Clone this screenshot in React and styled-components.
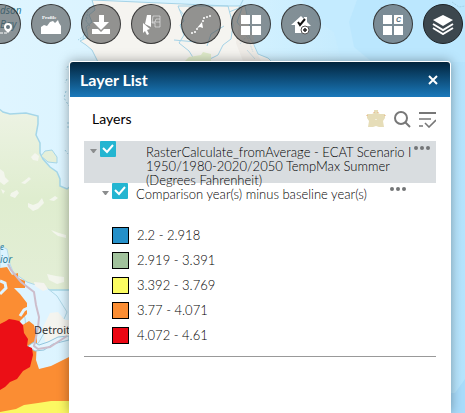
import React from "react";
import styled, { createGlobalStyle } from "styled-components";

const Global = createGlobalStyle`
  *, *::before, *::after { box-sizing: border-box; }
  body { margin: 0; font-family: Lato, "Open Sans", sans-serif; color: #000; }
`;

const Viewer = styled.div`
  position: relative;
  display: flex;
  flex-direction: column;
  min-height: 100vh;
  overflow: hidden;
`;

const MapCanvas = styled.svg`
  position: absolute;
  inset: 0;
  width: 100%;
  height: 100%;
`;

const Toolbar = styled.nav`
  position: relative;
  display: flex;
  justify-content: space-between;
  padding: 4px 2px 0 0;
`;

const ToolGroup = styled.div`
  display: flex;
  flex: none;
  gap: 10px;
  margin-left: ${(p) => (p.$bleed ? "-19px" : "0")};
`;

const ToolButton = styled.button`
  display: grid;
  place-items: center;
  width: 40px;
  height: 40px;
  padding: 0;
  border: 1px solid ${(p) => (p.$active ? "#1c2226" : "rgba(40, 40, 40, 0.85)")};
  border-radius: 50%;
  background: ${(p) => (p.$active ? "#3c474e" : "rgba(80, 80, 80, 0.6)")};
  color: #fff;
  cursor: pointer;
`;

const Panel = styled.section`
  position: relative;
  flex: 1;
  margin: 17px 14px 0 69px;
  border: 1px solid #fff;
  border-bottom: 0;
  border-radius: 4px 4px 0 0;
  background: #fff;
  box-shadow: 0 0 12px rgba(0, 0, 0, 0.35);
`;

const PanelHeader = styled.header`
  display: flex;
  align-items: center;
  justify-content: space-between;
  height: 35px;
  padding: 0 11px 0 10px;
  border-radius: 3px 3px 0 0;
  background: linear-gradient(#02243c, #1a79bb);
  color: #fff;
`;

const PanelTitle = styled.h1`
  margin: 0;
  font-size: 16px;
  line-height: 20px;
  font-weight: 700;
`;

const IconButton = styled.button`
  display: grid;
  place-items: center;
  padding: 0;
  border: 0;
  background: none;
  color: ${(p) => p.$tone || "#777"};
  cursor: pointer;
`;

const PanelBody = styled.div`
  padding: 0 14px;
`;

const ListHeader = styled.div`
  display: flex;
  align-items: center;
  justify-content: space-between;
  height: 44px;
  padding-left: 8px;
`;

const ListTitle = styled.h2`
  margin: 0;
  font-size: 14px;
  line-height: 20px;
  font-weight: 400;
`;

const Actions = styled.div`
  display: flex;
  align-items: center;
  gap: 8px;
`;

const LayerRow = styled.div`
  display: flex;
  align-items: flex-start;
  height: ${(p) => (p.$child ? "32px" : "42px")};
  padding: ${(p) => (p.$child ? "0 30px 0 18px" : "0 6px")};
  background: ${(p) => (p.$child ? "transparent" : "#d9dde0")};
`;

const Twisty = styled(IconButton)`
  width: 7px;
  margin: 8px 3px 0 0;
`;

const CheckBox = styled.span`
  display: grid;
  flex: none;
  width: 16px;
  height: 16px;
  > * { grid-area: 1 / 1; }
  svg { pointer-events: none; }
`;

const CheckInput = styled.input`
  appearance: none;
  width: 16px;
  height: 16px;
  margin: 0;
  border-radius: 1px;
  background: #24b5d1;
  &:not(:checked) { background: #fff; border: 1px solid #24b5d1; }
  &:not(:checked) + svg { visibility: hidden; }
`;

const LayerName = styled.label`
  flex: 1;
  min-width: 0;
  padding: 4px 0 0 ${(p) => (p.$child ? "8px" : "30px")};
  font-size: 13px;
  font-weight: 300;
  line-height: 14px;
`;

const MoreButton = styled(IconButton)`
  flex: none;
  width: 16px;
  margin-top: ${(p) => (p.$child ? "4px" : "5px")};
`;

const Legend = styled.ul`
  display: flex;
  flex-direction: column;
  gap: 8px;
  margin: 0;
  padding: 12px 0 12px 28px;
  border-bottom: 1px solid #999;
  list-style: none;
`;

const LegendItem = styled.li`
  display: flex;
  align-items: center;
  gap: 8px;
  font-size: 13px;
  font-weight: 300;
  line-height: 17px;
`;

const Swatch = styled.span`
  width: 17px;
  height: 17px;
  border: 1px solid #000;
  background: ${(p) => p.$color};
`;

const LEGEND = [
  ["#2590c9", "2.2 - 2.918"],
  ["#a1c29c", "2.919 - 3.391"],
  ["#fbfc62", "3.392 - 3.769"],
  ["#fb8d33", "3.77 - 4.071"],
  ["#eb0713", "4.072 - 4.61"],
];

const Glyph = ({ children, size = 22 }) => (
  <svg width={size} height={size} viewBox="0 0 22 22" fill="currentColor" aria-hidden="true">
    {children}
  </svg>
);

const TOOLS = [
  ["Area search", <Glyph><path d="M9 9H5M9 20H6" fill="none" stroke="currentColor" strokeDasharray="3 1" /><path d="M10 20h8" stroke="currentColor" strokeDasharray="3 1" /><path d="M18 20c-3-3-4-4-4-6a4 4 0 0 1 8 0c0 2-1 3-4 6z" /><circle cx="18" cy="14" r="2" fill="#667780" /></Glyph>],
  ["Elevation profile", <Glyph><text x="2" y="6" fontSize="5" fontWeight="700" fontFamily="Liberation Serif, serif">Profile</text><path d="M1 21v-7l3-2 3 1 3-4 3-1 2 2 3-3 1 3 2 3v8z" /></Glyph>],
  ["Download", <Glyph><path d="M9 2h5v7h5l-8 8-8-8h6zM2 16h6l3 3 3-3h6v5H2z" /></Glyph>],
  ["Select", <Glyph><path d="M7 2h4v12l-6-3z" /><path d="M13 3h7v11h-5v-4h-3zM12 9h3l1-3h4M15 9h5" fill="none" stroke="currentColor" opacity=".5" /><path d="M3 10l7 6-3 1 2 4-2 1-2-4-2 2z" /></Glyph>],
  ["Trace", <Glyph><circle cx="2" cy="20" r="1" /><circle cx="5" cy="19" r="1" /><circle cx="7" cy="16" r="1" /><circle cx="13" cy="8" r="1" /><circle cx="14" cy="5" r="1" /><circle cx="17" cy="4" r="1" /><circle cx="20" cy="3" r="1" /><path d="M12 9l1 6-3-1-3 1z" /></Glyph>],
  ["Basemap gallery", <Glyph><path d="M1 2h9v9H1zM12 2h9v9h-9zM1 13h9v9H1zM12 13h9v9h-9z" /></Glyph>],
  ["Home selection", <Glyph><path d="M1 12l10-9 3 3V4h3v5l4 4h-3v7H5v-8z" /><path d="M8 9l2 3 5-6" fill="none" stroke="#111" strokeWidth="2" /><circle cx="15" cy="17" r="4" fill="#fff" stroke="#555" /><path d="M15 15v4M13 17h4" stroke="#222" strokeWidth="1.5" /></Glyph>],
];

const END_TOOLS = [
  ["Custom basemaps", <Glyph><path d="M1 2h9v9H1zM12 2h9v9h-9zM1 13h9v9H1zM12 13h9v9h-9z" /><text x="14" y="9" fontSize="7" fontStyle="italic" fontWeight="700" fill="#57707d">C</text></Glyph>],
  ["Layer list", <Glyph><path d="M11 2l10 5-10 6L1 7z" /><path d="M1 11l10 6 10-6M1 15l10 6 10-6" fill="none" stroke="currentColor" strokeWidth="2" /></Glyph>],
];

function MapBackdrop() {
  return (
    <MapCanvas viewBox="0 0 465 413" preserveAspectRatio="xMinYMin slice" aria-hidden="true">
      <defs>
        <linearGradient id="sea"><stop offset="0" stopColor="#dff5ff" /><stop offset=".5" stopColor="#d5f2ff" /><stop offset="1" stopColor="#b5e4fd" /></linearGradient>
        <linearGradient id="land" x2="0" y2="1"><stop offset="0" stopColor="#edf3e4" /><stop offset=".5" stopColor="#dfedcf" /><stop offset="1" stopColor="#e3eed6" /></linearGradient>
      </defs>
      <path fill="url(#sea)" d="M0 0h465v413H0z" />
      <path fill="#c4ebff" d="M302 0l10 18 22 14 8 30h123V0z" />
      <path fill="#bbe7fe" d="M357 0l-8 22 5 25 18 15h93V0z" />
      <path fill="#a9dcfb" d="M451 393h4l10-14v34h-14z" />
      <path fill="#f5f4f0" stroke="#a5d3e7" d="M92 0l3 10-6 5 3 7-6 5 2 10-8 4 6 4 6 5 7 14h175l-6-6-10-4-4-9-6-10 2-8-3-12-2-9H178l6 15-4 4 4 10-5 8 10 8 5 8 2 9 8-1 6-8 8-4 5-10 8-6 2-14-5-19z" />
      <g fill="none" stroke="#a5d3e7">
        <path d="M184 15l-5-6M196 42l-22-2M207 46l4-12 13-8M242 8l-5 14 7 9M247 50l8 9M229 12l10-4 4-8" />
        <path strokeDasharray="2 1" d="M88 11l-2 10 4 5-6 8-1 6M84 36l-6 4M240 44l7-8 6 16M452 2l7 5 6-1" />
      </g>
      <path fill="#dfebca" d="M185 61l4-4 12-2 2-3 8 2v7z" />
      <path fill="#e9e4dd" d="M240 20l6 10 8 3v14l7 14h-18l-7-18z" opacity=".5" />
      <path fill="none" stroke="#9bcbdf" strokeDasharray="2 2" d="M68 66l-2 4M67 79l-2 4M66 91l-2 7 5 8M68 122v6M65 150l3 4" />
      <path fill="url(#land)" stroke="#a5d6e8" strokeWidth="1.5" d="M-2 108l5 4 7 2 16-1 12 3v8l-2 11 4 8v10l3 6 7 8 7 5 3 7v7l7 3 5-4v105H-2z" />
      <path fill="#e5efd9" stroke="#a5d6e8" d="M41 156l4-5 7-1 5 7v6l-9-1z" />
      <path fill="#f6f7f1" opacity=".85" d="M31 157l4-4 4 3-1 5-5-1zM0 169l4 3 1 5 4 4-5 4-4-3zM24 181l5-4 2 2-6 5-4-1zM11 193l6-3 2 3-4 5-5-2zM28 203l5 2 5-2 4-5 2 5-6 6-5 2-5-4zM1 189l4 2-2 3zM49 200l6-4 3 2-4 3zM51 230l8 3 7 2v3l-8-2-4-3zM47 274l9 2 8 1v5l-7 2-8-4z" />
      <path fill="#dcf3ff" stroke="#b5dcec" d="M0 246l7 3 3 15 4 10H0z" />
      <path fill="#dff4ff" stroke="#afd8e8" d="M14 273l13 9 9 3 11 3 10 8 10 16-3 7-9-5-7 12-9 16-5 6-7-8-2-22-6-15-6-15z" />
      <path fill="#f4f4ef" d="M34 282l10 1 4 6-5 2-8-5zM50 313l8-1 7 8h4v17l-24 5-2-15z" />
      <path fill="#fb8d33" d="M0 268l7-1 5 8 6-2v5l7 3v7H14l6 6 7 9v11l-7 7 1 5 8-5 5 4 3 15-1 20 3 9 12-3 18-9v76H0z" />
      <path fill="none" stroke="#dff4ff" strokeWidth="3" d="M0 281l5 2 1 5-6 6M20 316l4-6 6-3" />
      <path fill="#e3f5fe" stroke="#94c5dc" d="M28 346l6-4 5 3 9-3 10-5 11-1v4l-16 4-9 6-9 1-5-3z" />
      <path fill="none" stroke="#cdbdcb" strokeWidth="2" d="M8 264l3 6 10 12 13 10 2 13 3 12-1 11-4 18 4 3 12-2 17-11" />
      <path fill="#eb0f16" d="M0 324l6-3 3-2 6 1 4 1 4 4 1 8 4 6-1 7 5 2 1 7-3 12-7 4-6 8-7 3-5 5-5 3z" />
      <path fill="#fbf862" d="M0 412l16-3 8-4 14-2 13-2 18 0v14H0z" />
      <g fontFamily="Noto Sans, sans-serif">
        <g fill="#32809a" fontSize="10" fontStyle="italic">
          <text x="0" y="14">dson</text><text x="0" y="28">Bay</text>
          <text x="0" y="250" fontSize="8">e</text><text x="0" y="263">ior</text>
        </g>
        <text x="34" y="334" fill="#333" fontSize="11">Detroit</text>
      </g>
    </MapCanvas>
  );
}

function Layer({ id, name, child }) {
  return (
    <LayerRow $child={child}>
      <Twisty aria-label={"Collapse " + name}>
        <svg width="7" height="5" viewBox="0 0 7 5" fill="#8b8d8e"><path d="M0 0h7L4 4H3z" /></svg>
      </Twisty>
      <CheckBox>
        <CheckInput type="checkbox" id={id} defaultChecked />
        <svg width="16" height="16" viewBox="0 0 16 16" fill="none" stroke="#fff" strokeWidth="2"><path d="M3 7l4 4 6-7" /></svg>
      </CheckBox>
      <LayerName htmlFor={id} $child={child}>{name}</LayerName>
      <MoreButton $child={child} aria-label={"Options for " + name}>
        <svg width="16" height="5" viewBox="0 0 16 5" fill="#737577"><circle cx="2" cy="2" r="2" /><circle cx="8" cy="2" r="2" /><circle cx="14" cy="2" r="2" /></svg>
      </MoreButton>
    </LayerRow>
  );
}

export default function App() {
  return (
    <Viewer>
      <Global />
      <MapBackdrop />
      <Toolbar aria-label="Map tools">
        <ToolGroup $bleed>
          {TOOLS.map(([label, icon]) => <ToolButton key={label} aria-label={label}>{icon}</ToolButton>)}
        </ToolGroup>
        <ToolGroup>
          {END_TOOLS.map(([label, icon], i) => <ToolButton key={label} aria-label={label} $active={i === 1}>{icon}</ToolButton>)}
        </ToolGroup>
      </Toolbar>
      <Panel>
        <PanelHeader>
          <PanelTitle>Layer List</PanelTitle>
          <IconButton $tone="#fff" aria-label="Close">
            <svg width="12" height="12" viewBox="0 0 12 12" stroke="currentColor" strokeWidth="2"><path d="M2 2l8 8M10 2l-8 8" /></svg>
          </IconButton>
        </PanelHeader>
        <PanelBody>
          <ListHeader>
            <ListTitle>Layers</ListTitle>
            <Actions>
              <IconButton aria-label="Favorites">
                <svg width="20" height="18" viewBox="0 0 20 18"><path d="M8 0h4v3l2 1h5v4l-2 3 1 6h-5l-3-1-3 1H2l1-6-2-3V4h5l2-1z" fill="#e6ddb8" /><path d="M8 2v1M12 2v1M1 5v1M19 5v1" stroke="#e8a979" /><path d="M10 9v1" stroke="#fff" /></svg>
              </IconButton>
              <IconButton aria-label="Search layers">
                <svg width="17" height="17" viewBox="0 0 17 17" fill="none" stroke="currentColor" strokeWidth="2"><circle cx="7" cy="7" r="6" /><path d="M11 11l5 5" /></svg>
              </IconButton>
              <IconButton aria-label="Layer visibility">
                <svg width="17" height="17" viewBox="0 0 17 17" fill="none" stroke="currentColor" strokeWidth="2"><path d="M0 2h17" /><path d="M0 8h12M0 15h4M6 12l4 4 7-7" strokeWidth="1.6" /></svg>
              </IconButton>
            </Actions>
          </ListHeader>
          <Layer id="raster" name="RasterCalculate_fromAverage - ECAT Scenario I 1950/1980-2020/2050 TempMax Summer (Degrees Fahrenheit)" />
          <Layer id="comparison" child name="Comparison year(s) minus baseline year(s)" />
          <Legend>
            {LEGEND.map(([color, label]) => (
              <LegendItem key={label}><Swatch $color={color} />{label}</LegendItem>
            ))}
          </Legend>
        </PanelBody>
      </Panel>
    </Viewer>
  );
}
